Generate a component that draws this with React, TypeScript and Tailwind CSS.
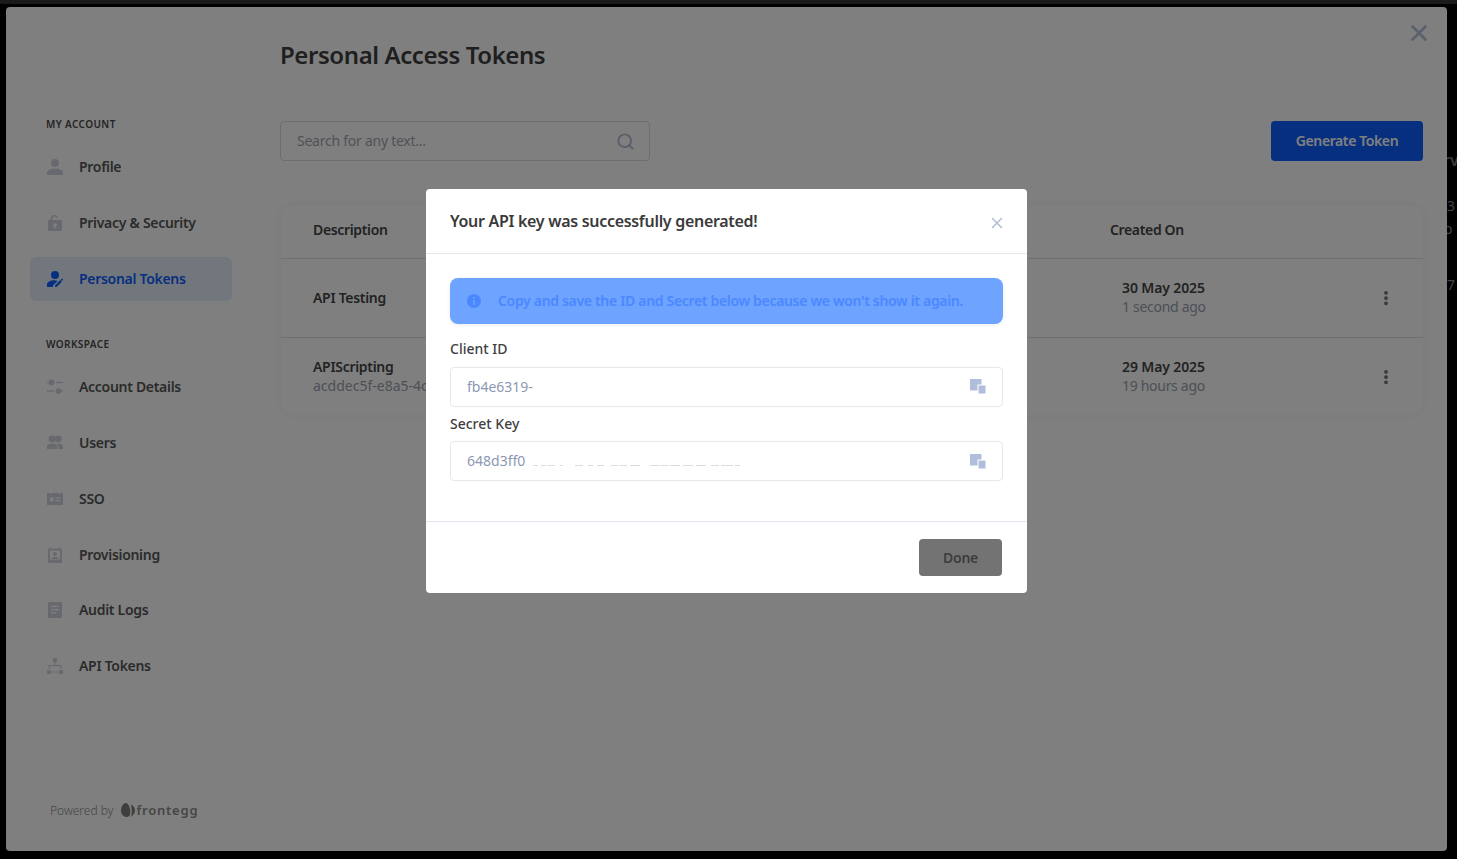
import { X, Search, EllipsisVertical } from 'lucide-react';
import type { ReactNode } from 'react';

const font = "font-['Noto_Sans','Liberation_Sans',sans-serif]";

const ProfileIcon = () => (
  <svg viewBox="0 0 16 16" className="h-4 w-4 fill-current">
    <circle cx="8" cy="4" r="4" />
    <path d="M0 16v-2.200C0 11 4.500 9.600 8 9.600s8 1.400 8 4.200V16z" />
  </svg>
);
const LockIcon = () => (
  <svg viewBox="0 0 16 16" className="h-4 w-4 fill-current">
    <path d="M3.600 5V3.800C3.600 1.600 5.400 0 7.500 0c1.700 0 3 1 3.600 2.400l-1.400.6C9.400 2.100 8.600 1.500 7.500 1.500 6.200 1.500 5.200 2.500 5.200 3.800V5z" />
    <path
      fillRule="evenodd"
      d="M1.800 5h12.400c.5 0 .8.4.8.8v9.400c0 .5-.4.8-.8.8H1.800c-.5 0-.8-.4-.8-.8V5.800c0-.5.4-.8.8-.8zM8 8.300a1.800 1.800 0 0 0-.8 3.400V13.500h1.600v-1.800A1.800 1.800 0 0 0 8 8.300z"
    />
  </svg>
);
const TokenUserIcon = () => (
  <svg viewBox="0 0 16 16" className="h-4 w-4 fill-current">
    <circle cx="8" cy="4" r="4" />
    <path d="M0 16v-2.500C0 11 3.500 9.400 7 9.300c1.400 0 2.700.2 3.600.6L6 14.500V16z" />
    <path d="M8 16v-1.600l5.300-5.300 1.600 1.600L9.600 16zM13.900 8.500l.8-.7c.2-.2.5-.2.7 0l.6.6c.2.2.2.5 0 .7l-.7.8z" />
  </svg>
);
const SlidersIcon = () => (
  <svg viewBox="0 0 16 16" className="h-4 w-4 fill-current">
    <circle cx="4.500" cy="3.500" r="3" />
    <rect x="0" y="2.800" width="2" height="1.400" />
    <rect x="9" y="2.800" width="7" height="1.400" />
    <circle cx="11.500" cy="12" r="3" />
    <rect x="0" y="11.300" width="7" height="1.400" />
    <rect x="14" y="11.300" width="2" height="1.400" />
  </svg>
);
const UsersIcon = () => (
  <svg viewBox="0 0 16 16" className="h-4 w-4 fill-current">
    <circle cx="5.200" cy="4" r="3.600" />
    <path d="M0 14v-2.200C0 9.800 2.600 8.600 5.200 8.600s5.200 1.200 5.200 3.200V14z" />
    <circle cx="11.200" cy="4" r="3.400" />
    <path d="M11.500 14v-2.200c0-1.300-.7-2.400-1.800-3.100.5-.1 1-.1 1.500-.1 2.400 0 4.800 1.200 4.800 3.200V14z" />
  </svg>
);
const SsoIcon = () => (
  <svg viewBox="0 0 16 12" className="h-3 w-4 fill-current">
    <path
      fillRule="evenodd"
      d="M0 0h3v1.200h1.500V0h7v1.200H13V0h3v12H0zM2.800 4.500v3.800h3.700V4.500zM8.500 4.500v1.200h4.800V4.500zM8.500 7.100v1.200h4.800V7.100z"
    />
  </svg>
);
const ProvisioningIcon = () => (
  <svg viewBox="0 0 16 16" className="h-4 w-4 fill-current">
    <path
      fillRule="evenodd"
      d="M2 1.500h1V0h1v1.500h8V0h1v1.500h1c.6 0 1 .4 1 1V15c0 .6-.4 1-1 1H2c-.6 0-1-.4-1-1V2.500c0-.6.4-1 1-1zM3 3.500V12.500h10V3.500zM8 5a2 2 0 1 1 0 4 2 2 0 0 1 0-4zM4.500 12c0-1.500 2-2.300 3.500-2.300s3.500.8 3.500 2.300z"
    />
  </svg>
);
const LogsIcon = () => (
  <svg viewBox="0 0 16 16" className="h-4 w-4 fill-current">
    <path
      fillRule="evenodd"
      d="M2.500 0h11c.8 0 1.500.7 1.500 1.500v13c0 .8-.7 1.500-1.500 1.500h-11C1.700 16 1 15.300 1 14.500v-13C1 .7 1.700 0 2.500 0zM4 3.800v1.200h8V3.800zM4 7v1.200h8V7zM4 10.200v1.200h5v-1.200z"
    />
  </svg>
);
const ApiIcon = () => (
  <svg viewBox="0 0 16 16" className="h-4 w-4 fill-current">
    <rect x="6" y="0" width="4" height="4" />
    <rect x="7.400" y="4" width="1.200" height="3" />
    <path d="M1.500 11V7h13v4h-1.200V8.200H2.700V11z" />
    <rect x="0" y="12" width="4" height="4" />
    <rect x="12" y="12" width="4" height="4" />
    <rect x="5" y="13.400" width="2.500" height="1.200" />
    <rect x="8.500" y="13.400" width="2.500" height="1.200" />
  </svg>
);
const CopyIcon = () => (
  <svg viewBox="0 0 16 15" className="block h-[15px] w-[16px] fill-[#b0bedb]">
    <rect x="0" y="0" width="11.500" height="11.500" />
    <rect x="8" y="6" width="8" height="9" stroke="#ffffff" strokeWidth="1" />
  </svg>
);
const InfoDot = () => (
  <svg viewBox="0 0 14 14" className="h-[14px] w-[14px] shrink-0">
    <circle cx="7" cy="7" r="7" fill="#4b88ff" />
    <rect x="6.200" y="3" width="1.600" height="1.700" fill="#6ea3ff" />
    <rect x="6.200" y="6" width="1.600" height="5" fill="#6ea3ff" />
  </svg>
);
const EggLogo = () => (
  <svg viewBox="0 0 14 14" className="h-[14px] w-[14px] shrink-0 fill-[#7f7f7f]">
    <path d="M5 0C2.400 0 0 3.600 0 7.300 0 11 2.400 14 5.500 14c1.100 0 2-.4 2.800-1 1-1.500 1.200-3.600.9-5.700C8.800 4 7.300 0 5 0z" />
    <path d="M10 1.500c2 1 4 3.300 4 5.800 0 3-1.900 5.500-4.300 6.400 1-1.600 1.300-4 1-6.300C10.400 5.300 10.400 3.300 10 1.500z" />
  </svg>
);

// what is left of the masked secret, start and width of each dash
const residue = [
  [0, 5], [8, 5], [15, 7], [27, 3], [42, 8], [55, 5], [64, 7], [78, 7], [87, 7], [97, 10],
  [117, 10], [128, 7], [137, 10], [150, 10], [163, 10], [178, 8], [188, 12], [202, 5],
];

const NavItem = ({ icon, label, active }: { icon: ReactNode; label: string; active?: boolean }) => (
  <div
    className={`mb-3 flex h-11 items-center gap-[16px] rounded-md pl-[17px] text-[14px] font-semibold tracking-[-0.3px] ${
      active ? 'bg-[#e4ecfb] text-[#0e5ffe]' : 'text-[#565656]'
    }`}
  >
    <span className={`flex w-4 justify-center ${active ? 'text-[#0e5ffe]' : 'text-[#d0d3dc]'}`}>{icon}</span>
    <span className="-mt-[2px]">{label}</span>
  </div>
);

const SectionLabel = ({ children }: { children: ReactNode }) => (
  <div className="pl-4 text-[10px] font-semibold uppercase leading-4 tracking-[0.04em] text-[#4a4a4a]">{children}</div>
);

const TokenRow = ({ name, id, date, ago, last }: { name: string; id?: string; date: string; ago: string; last?: boolean }) => (
  <div className={`flex items-center border-t border-[#e0e0e0] pb-[2px] pl-8 ${last ? 'h-[78px]' : 'h-[79px]'}`}>
    <div className="w-[809px] text-[14px] leading-[19px]">
      <div className="font-semibold tracking-[-0.3px] text-[#454545]">{name}</div>
      {id && <div className="text-[#9aa0ae]">{id}</div>}
    </div>
    <div className="text-[14px] leading-[19px]">
      <div className="font-semibold tracking-[-0.12px] text-[#454545]">{date}</div>
      <div className="tracking-[-0.3px] text-[#9aa0ae]">{ago}</div>
    </div>
    <EllipsisVertical className="ml-auto mr-[28px] mt-[2px] h-[18px] w-[18px] text-[#6a6a6a]" strokeWidth={3} />
  </div>
);

const CopyField = ({ label, value, masked }: { label: string; value: string; masked?: boolean }) => (
  <div>
    <div className="mb-[8.500px] text-[14px] font-medium leading-[18px] text-[#3f3f3f]">{label}</div>
    <div className="flex h-10 items-center rounded border border-[#e6e8ee] pl-4 pr-4 text-[14px] text-[#8c99b3]">
      <span className="-mt-px">{value}</span>
      {masked && (
        <svg viewBox="0 0 208 1" className="ml-2 mt-[9px] h-px w-[208px] fill-[#d9dce4]">
          {residue.map(([x, w]) => (
            <rect key={x} x={x} y="0" width={w} height="1" />
          ))}
        </svg>
      )}
      <span className="ml-auto">
        <CopyIcon />
      </span>
    </div>
  </div>
);

export default function App() {
  return (
    <div className={`relative h-screen w-full overflow-hidden bg-black ${font}`}>
      <div className="h-1 bg-[#343434]" />
      {/* bits of the page behind the settings panel */}
      <div className="absolute left-[1443px] top-[148px] text-[16px] font-semibold text-[#777]">rv</div>
      <div className="absolute left-[1447px] top-[195px] text-[14px] text-[#888]">3</div>
      <div className="absolute left-[1444px] top-[218px] text-[14px] text-[#888]">o</div>
      <div className="absolute left-[1447px] top-[274px] text-[14px] text-[#888]">7</div>

      <div className="relative ml-[6px] mt-[3px] flex h-[844px] w-[1441px] rounded-sm bg-white">
        <aside className="flex w-[274px] flex-col pb-[31px] pl-6 pr-[48px] pt-[109px]">
          <SectionLabel>My Account</SectionLabel>
          <div className="mt-[13px]">
            <NavItem icon={<ProfileIcon />} label="Profile" />
            <NavItem icon={<LockIcon />} label="Privacy & Security" />
            <NavItem icon={<TokenUserIcon />} label="Personal Tokens" active />
          </div>
          <div className="mt-[23px]">
            <SectionLabel>Workspace</SectionLabel>
          </div>
          <div className="mt-[13px] [&>div:nth-child(4)]:mb-[11px]">
            <NavItem icon={<SlidersIcon />} label="Account Details" />
            <NavItem icon={<UsersIcon />} label="Users" />
            <NavItem icon={<SsoIcon />} label="SSO" />
            <NavItem icon={<ProvisioningIcon />} label="Provisioning" />
            <NavItem icon={<LogsIcon />} label="Audit Logs" />
            <NavItem icon={<ApiIcon />} label="API Tokens" />
          </div>
          <div className="mt-auto flex items-center gap-2 pl-5 text-[12px] font-light text-[#8a8a8a]">
            <span>Powered by</span>
            <span className="-mt-px flex items-center gap-px text-[13px] font-semibold tracking-[0.06em] text-[#8c8c8c]">
              <EggLogo />
              frontegg
            </span>
          </div>
        </aside>

        <main className="flex-1 pr-6 pt-[31px]">
          <h1 className="text-[24px] font-semibold leading-[34px] tracking-[-0.42px] text-[#3e3e3e]">
            Personal Access Tokens
          </h1>
          <div className="mt-[49px] flex items-center justify-between">
            <div className="flex h-10 w-[370px] items-center justify-between rounded border border-[#dcdcdc] pl-4 pr-[14px] text-[14px] text-[#a0a4ae]">
              <span className="-mt-[2px] tracking-[-0.25px]">Search for any text...</span>
              <Search className="h-[19px] w-[19px] text-[#b5c0d8]" strokeWidth={2.5} />
            </div>
            <button className="flex h-10 w-[152px] items-center justify-center rounded bg-[#0e5ffe] pb-[2px] text-[14px] font-semibold tracking-[-0.4px] text-white">
              Generate Token
            </button>
          </div>

          <div className="ml-px mt-[44px] rounded-xl shadow-[0_0_8px_rgba(0,0,0,0.06)]">
            <div className="flex h-[53px] items-center pb-[4px] pl-8 text-[14px] font-semibold tracking-[-0.35px] text-[#454545]">
              <div className="w-[797px]">Description</div>
              <div>Created On</div>
            </div>
            <TokenRow name="API Testing" date="30 May 2025" ago="1 second ago" />
            <TokenRow
              name="APIScripting"
              id="acddec5f-e8a5-4c3e-91b7-6d20f1a4c7e2"
              date="29 May 2025"
              ago="19 hours ago"
              last
            />
          </div>
        </main>

        <X className="absolute right-[15px] top-[13px] h-[26px] w-[26px] text-[#b5c0d8]" strokeWidth={2.6} />
      </div>

      {/* dimming layer and the dialog on top of it */}
      <div className="fixed inset-0 bg-black/50" />
      <div className="fixed left-[426px] top-[189px] w-[601px] rounded bg-white">
        <div className="flex h-[65px] items-center justify-between border-b border-[#e6e8ee] pl-6 pr-[21px]">
          <div className="text-[16px] font-semibold tracking-[-0.3px] text-[#3a3a3a]">
            Your API key was successfully generated!
          </div>
          <X className="mt-[3px] h-[18px] w-[18px] text-[#b5c0d8]" strokeWidth={2.2} />
        </div>
        <div className="px-6 pb-10 pt-6">
          <div className="flex h-[46px] items-center gap-[17px] rounded-lg bg-[#6ea3ff] pl-[17px] text-[14px] font-semibold text-[#4b88ff] shadow-[0_1px_4px_rgba(0,0,0,0.08)]">
            <InfoDot />
            <span className="-mt-[2px] tracking-[-0.32px]">
              Copy and save the ID and Secret below because we won't show it again.
            </span>
          </div>
          <div className="mt-4 flex flex-col gap-2">
            <CopyField label="Client ID" value="fb4e6319-" />
            <CopyField label="Secret Key" value="648d3ff0" masked />
          </div>
        </div>
        <div className="flex h-[72px] items-center justify-end border-t border-[#e3e6ee] pr-[25px]">
          <button className="flex h-[37px] w-[83px] items-center justify-center rounded-sm bg-[#737373] text-[14px] font-semibold tracking-[-0.2px] text-[#3c3c3c]">
            Done
          </button>
        </div>
      </div>
    </div>
  );
}
